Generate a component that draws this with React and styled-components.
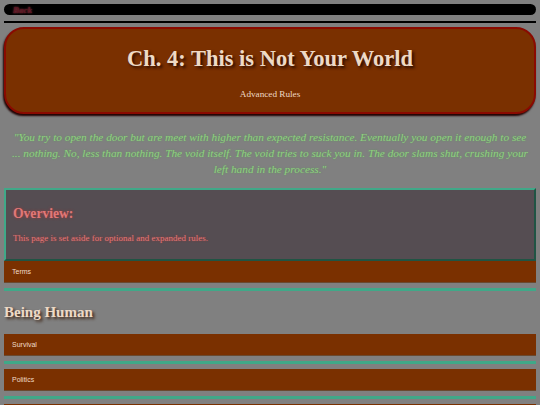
import React from "react";
import styled, { createGlobalStyle } from "styled-components";

const serif = `"Liberation Serif", "Times New Roman", Times, serif`;

const Global = createGlobalStyle`
  html, body { margin: 0; padding: 0; }
  body {
    background: #808080;
    padding: 4px;
    font-family: ${serif};
  }
`;

const Nav = styled.nav`
  background: #000;
  height: 11px;
  border-radius: 6px;
  display: flex;
  align-items: center;
  padding: 0 9px;
`;

const BackLink = styled.a`
  font-family: ${serif};
  font-style: italic;
  font-weight: bold;
  font-size: 9px;
  color: #5a1420;
  text-shadow: 0 0 2px #b04858;
  text-decoration: none;
`;

const Rule = styled.hr`
  border: none;
  height: 2px;
  background: #000;
  margin: 6px 0 4px;
`;

const Header = styled.header`
  background: #7a3000;
  border: 2px solid #8a0a00;
  border-radius: 20px;
  box-shadow: -1px 2px 2px #200000;
  height: 87px;
  display: flex;
  flex-direction: column;
  align-items: center;
  box-sizing: border-box;
  padding-top: 16px;
`;

const Title = styled.h1`
  margin: 0;
  font-family: ${serif};
  font-size: 22.5px;
  line-height: 28px;
  font-weight: bold;
  color: #eedac6;
  text-shadow: 2px 2px 3px #2a0c00;
`;

const Subtitle = styled.p`
  margin: 15px 0 0;
  font-family: ${serif};
  font-size: 9.2px;
  line-height: 12px;
  color: #eedac6;
`;

const Quote = styled.p`
  margin: 15px 6px 0;
  text-align: center;
  font-family: ${serif};
  font-style: italic;
  font-size: 11.3px;
  line-height: 16px;
  color: #90d080;
  text-shadow: 0 0 2px #5a9a5a;
`;

const Overview = styled.section`
  margin-top: 11px;
  background: #554d52;
  border: 2px outset #40a888;
  padding: 15px 7px 15px;
`;

const OverviewTitle = styled.h3`
  margin: 0;
  font-family: ${serif};
  font-size: 13.6px;
  line-height: 17px;
  font-weight: bold;
  color: #e07878;
  text-shadow: 0 0 3px #a03838;
`;

const OverviewText = styled.p`
  margin: 11px 0 0;
  font-family: ${serif};
  font-size: 9px;
  line-height: 11px;
  color: #e07878;
  text-shadow: 0 0 2px #a03838;
`;

const Section = styled.div`
  border-bottom: 3px solid #40a888;
  margin-bottom: 5px;
`;

const Bar = styled.button`
  display: block;
  box-sizing: border-box;
  width: 100%;
  height: 22px;
  background: #7a3000;
  border: none;
  border-bottom: 1px solid #6a4a30;
  text-align: left;
  padding: 0 8px;
  font-family: "Liberation Sans", Arial, sans-serif;
  font-size: 7px;
  color: #f0dcc8;
  margin: 0 0 5px;
`;

const Heading = styled.h2`
  margin: 12px 0 13px;
  font-family: ${serif};
  font-size: 15px;
  line-height: 18px;
  font-weight: bold;
  color: #eedac6;
  text-shadow: 2px 2px 3px #3a2010;
`;

export default function App() {
  return (
    <>
      <Global />
      <Nav>
        <BackLink href="#">Back</BackLink>
      </Nav>
      <Rule />
      <Header>
        <Title>Ch. 4: This is Not Your World</Title>
        <Subtitle>Advanced Rules</Subtitle>
      </Header>
      <Quote>
        "You try to open the door but are meet with higher than expected
        resistance. Eventually you open it enough to see ... nothing. No, less
        than nothing. The void itself. The void tries to suck you in. The door
        slams shut, crushing your left hand in the process."
      </Quote>
      <Overview>
        <OverviewTitle>Overview:</OverviewTitle>
        <OverviewText>This page is set aside for optional and expanded rules.</OverviewText>
      </Overview>
      <Section>
        <Bar>Terms</Bar>
      </Section>
      <Heading>Being Human</Heading>
      <Section>
        <Bar>Survival</Bar>
      </Section>
      <Section>
        <Bar>Politics</Bar>
      </Section>
      <Section>
        <Bar aria-label="Combat" />
      </Section>
    </>
  );
}
